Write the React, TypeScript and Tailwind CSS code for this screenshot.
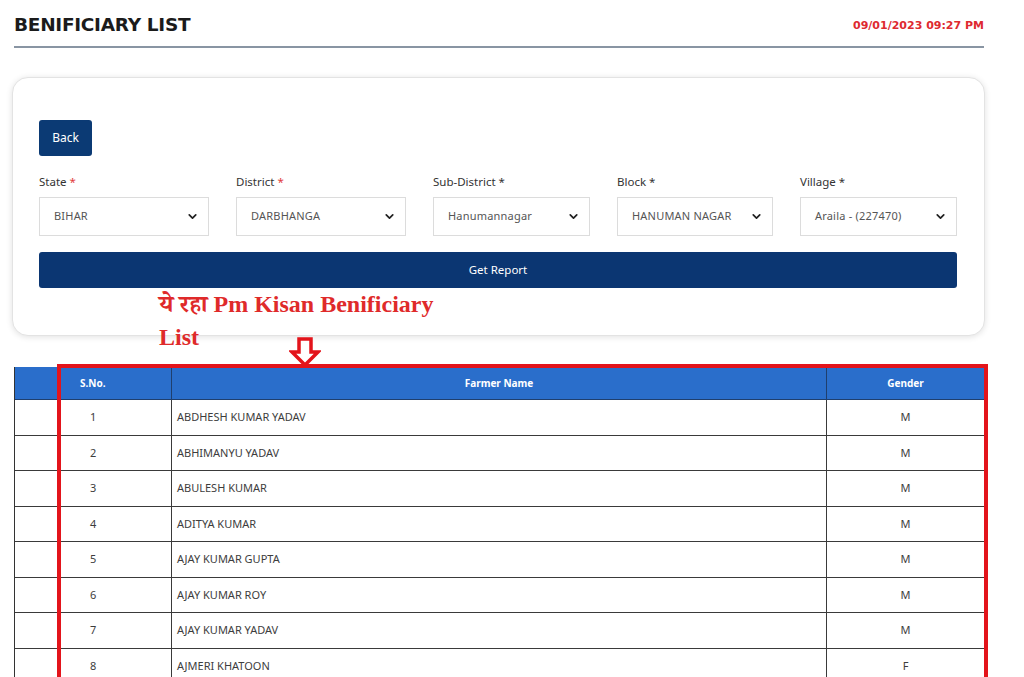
import { ChevronDown } from "lucide-react";

type Farmer = { sno: number; name: string; gender: string };

const farmers: Farmer[] = [
  { sno: 1, name: "ABDHESH KUMAR YADAV", gender: "M" },
  { sno: 2, name: "ABHIMANYU YADAV", gender: "M" },
  { sno: 3, name: "ABULESH KUMAR", gender: "M" },
  { sno: 4, name: "ADITYA KUMAR", gender: "M" },
  { sno: 5, name: "AJAY KUMAR GUPTA", gender: "M" },
  { sno: 6, name: "AJAY KUMAR ROY", gender: "M" },
  { sno: 7, name: "AJAY KUMAR YADAV", gender: "M" },
  { sno: 8, name: "AJMERI KHATOON", gender: "F" },
];

const filters = [
  { label: "State", value: "BIHAR", red: true, w: "w-[170px]" },
  { label: "District", value: "DARBHANGA", red: true, w: "w-[170px]" },
  { label: "Sub-District", value: "Hanumannagar", red: false, w: "w-[157px]" },
  { label: "Block", value: "HANUMAN NAGAR", red: false, w: "w-[156px]" },
  { label: "Village", value: "Araila - (227470)", red: false, w: "w-[157px]" },
];

function DownArrow() {
  return (
    <svg width="32" height="30" viewBox="0 0 32 30" fill="none">
      <path
        d="M10 2 H22 V15 H29 L16 28 L3 15 H10 Z"
        stroke="#e3141b"
        strokeWidth="3.5"
        strokeLinejoin="miter"
        fill="white"
      />
    </svg>
  );
}

export default function App() {
  return (
    <div className="relative w-[1024px] h-[677px] overflow-hidden bg-white font-['Noto_Sans',sans-serif]">
      {/* Header */}
      <div className="mx-[14px] w-[970px] flex items-end justify-between pt-[14px] pb-[11px] border-b-2 border-[#8995a3]">
        <h1 className="text-[18.5px] font-bold leading-[21px] text-[#1b1b1b] font-['DejaVu_Sans',sans-serif] tracking-[-0.3px]">
          BENIFICIARY LIST
        </h1>
        <span className="text-[11px] font-bold leading-[14px] text-[#de2a30] font-['DejaVu_Sans',sans-serif] mb-[2px]">
          09/01/2023 09:27 PM
        </span>
      </div>

      {/* Filter card */}
      <div className="relative mt-[29px] ml-[12px] w-[973px] h-[259px] rounded-[16px] border border-[#e3e3e3] bg-white shadow-[0_1px_6px_rgba(0,0,0,0.12)] pl-[26px] pt-[42px]">
        <button className="h-[36px] w-[53px] rounded-[3px] bg-[#0b3a74] text-[12px] text-white">
          Back
        </button>

        <div className="mt-[18px] flex gap-[27px]">
          {filters.map((f) => (
            <div key={f.label} className={f.w}>
              <div className="text-[11.5px] leading-[16px] text-[#333]">
                {f.label} <span className={f.red ? "text-[#e23b3b]" : "text-[#333]"}>*</span>
              </div>
              <div className="mt-[7px] h-[39px] border border-[#dcdcdc] flex items-center justify-between pl-[14px] pr-[9px]">
                <span className="text-[11px] text-[#555] tracking-[0.2px]">{f.value}</span>
                <ChevronDown className="w-[13px] h-[13px] text-[#222]" strokeWidth={3.2} />
              </div>
            </div>
          ))}
        </div>

        <button className="mt-[16px] h-[36px] w-[918px] rounded-[3px] bg-[#0b3672] text-[11.5px] text-white">
          Get Report
        </button>

        {/* annotation */}
        <div className="absolute left-[146px] top-[210px] w-[290px] text-[24px] font-bold leading-[33px] text-[#df2a2a] font-['Liberation_Serif','Noto_Serif_Devanagari','Noto_Sans_Devanagari',serif]">
          ये रहा Pm Kisan Benificiary List
        </div>
      </div>

      <div className="absolute left-[289px] top-[337px]">
        <DownArrow />
      </div>

      {/* Table */}
      <div className="mt-[31px] ml-[14px] w-[970px] border-l border-[#333]">
        <div className="flex h-[33px] bg-[#2a6ecb] text-[10px] font-bold text-white border-b border-[#1f3f6e]">
          <div className="w-[44px] border-r border-[#2a6ecb]" />
          <div className="w-[113px] flex items-center pl-[21px] border-r border-[#1f3f6e]">S.No.</div>
          <div className="w-[655px] flex items-center justify-center border-r border-[#1f3f6e]">Farmer Name</div>
          <div className="flex-1 flex items-center justify-center">Gender</div>
        </div>
        {farmers.map((r) => (
          <div key={r.sno} className="flex h-[35.5px] border-b border-[#3a3a3a] text-[11px] text-[#3d3d3d] bg-white">
            <div className="w-[44px] border-r border-[#3a3a3a]" />
            <div className="w-[113px] flex items-center pl-[31px] border-r border-[#3a3a3a]">{r.sno}</div>
            <div className="w-[655px] flex items-center pl-[5px] border-r border-[#3a3a3a]">{r.name}</div>
            <div className="flex-1 flex items-center justify-center">{r.gender}</div>
          </div>
        ))}
      </div>

      {/* red highlight box */}
      <div className="absolute left-[57px] top-[364px] w-[931px] h-[340px] border-[4px] border-[#e3141b] pointer-events-none" />
    </div>
  );
}
